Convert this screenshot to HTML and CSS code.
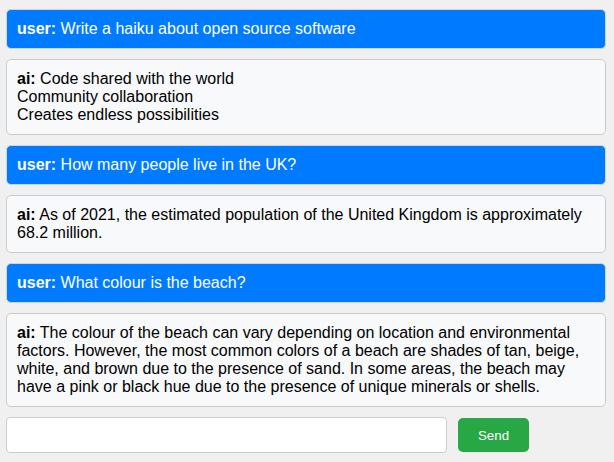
FILE: index.html
```html
<!DOCTYPE html>
<html>
<head>
<meta charset="utf-8">
<link rel="stylesheet" href="styles.css">
</head>
<body>
<div class="chat">
  <div class="msg user"><b>user:</b> Write a haiku about open source software</div>
  <div class="msg ai"><b>ai:</b> Code shared with the world<br>Community collaboration<br>Creates endless possibilities</div>
  <div class="msg user"><b>user:</b> How many people live in the UK?</div>
  <div class="msg ai"><b>ai:</b> As of 2021, the estimated population of the United Kingdom is approximately 68.2 million.</div>
  <div class="msg user"><b>user:</b> What colour is the beach?</div>
  <div class="msg ai"><b>ai:</b> The colour of the beach can vary depending on location and environmental factors. However, the most common colors of a beach are shades of tan, beige, white, and brown due to the presence of sand. In some areas, the beach may have a pink or black hue due to the presence of unique minerals or shells.</div>
  <form class="composer">
    <input class="field" type="text">
    <button class="send" type="button">Send</button>
  </form>
</div>
</body>
</html>
```
FILE: styles.css
```css
html, body {
  margin: 0;
  padding: 0;
  background: #f0f0f0;
}
body {
  font-family: "Liberation Sans", Arial, sans-serif;
  font-size: 16px;
  line-height: 18px;
  color: #000;
}
.chat {
  width: 600px;
  padding: 9px 0 0 6px;
  display: flex;
  flex-direction: column;
  gap: 10px;
}
.msg {
  padding: 10px;
  border: 1px solid #ccc;
  border-radius: 5px;
}
.user {
  background: #007bff;
  color: #fff;
  border-color: #d0d4da;
}
.ai {
  background: #f8f9fa;
  color: #000;
}
.composer {
  margin: 0;
  display: flex;
  align-items: center;
  gap: 11px;
}
.field {
  box-sizing: border-box;
  width: 441px;
  height: 36px;
  margin: 0;
  border: 1px solid #ccc;
  border-radius: 4px;
  background: #fff;
  padding: 0 10px;
  font-family: "Liberation Sans", Arial, sans-serif;
  font-size: 13px;
}
.send {
  box-sizing: border-box;
  width: 71px;
  height: 34px;
  margin: 0;
  border: none;
  border-radius: 5px;
  background: #28a745;
  color: #fff;
  font-family: "Liberation Sans", Arial, sans-serif;
  font-size: 13.33px;
  padding: 0;
}
```
